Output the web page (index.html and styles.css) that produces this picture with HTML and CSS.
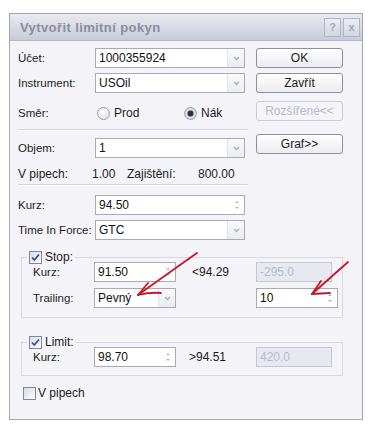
FILE: index.html
```html
<!DOCTYPE html>
<html lang="cs">
<head>
  <meta charset="UTF-8" />
  <title>Vytvořit limitní pokyn</title>
  <link rel="stylesheet" href="styles.css">
</head>
<body>
  <div class="dialog">
    <div class="titlebar">
      <span class="title">Vytvořit limitní pokyn</span>
      <span class="tbtns"><span class="tbtn">?</span><span class="tbtn">x</span></span>
    </div>

    <div class="body">
      <div class="top">
        <div class="form">
          <div class="row">
            <span class="lbl">Účet:</span>
            <div class="combo"><span class="val">1000355924</span><span class="drop"><svg width="7" height="5" viewBox="0 0 7 5"><path d="M1 1l2.5 2.5L6 1" fill="none" stroke="#a9abb8" stroke-width="1.3"/></svg></span></div>
          </div>
          <div class="row">
            <span class="lbl">Instrument:</span>
            <div class="combo"><span class="val">USOil</span><span class="drop"><svg width="7" height="5" viewBox="0 0 7 5"><path d="M1 1l2.5 2.5L6 1" fill="none" stroke="#a9abb8" stroke-width="1.3"/></svg></span></div>
          </div>
          <div class="row radios">
            <span class="lbl">Směr:</span>
            <span class="radio"><span class="dot"></span>Prod</span>
            <span class="radio on"><span class="dot"></span>Nák</span>
          </div>
          <div class="sep"></div>
          <div class="row">
            <span class="lbl">Objem:</span>
            <div class="combo"><span class="val">1</span><span class="drop"><svg width="7" height="5" viewBox="0 0 7 5"><path d="M1 1l2.5 2.5L6 1" fill="none" stroke="#a9abb8" stroke-width="1.3"/></svg></span></div>
          </div>
          <div class="row info">
            <span class="lbl">V pipech:</span>
            <span class="num">1.00</span>
            <span class="ilbl">Zajištění:</span>
            <span class="num">800.00</span>
          </div>
          <div class="sep sep2"></div>
          <div class="row">
            <span class="lbl">Kurz:</span>
            <div class="spin wide"><span class="val">94.50</span><span class="arrows"><i class="up"></i><i class="dn"></i></span></div>
          </div>
          <div class="row">
            <span class="lbl">Time In Force:</span>
            <div class="combo"><span class="val">GTC</span><span class="drop"><svg width="7" height="5" viewBox="0 0 7 5"><path d="M1 1l2.5 2.5L6 1" fill="none" stroke="#a9abb8" stroke-width="1.3"/></svg></span></div>
          </div>
        </div>

        <div class="actions">
          <button class="btn">OK</button>
          <button class="btn">Zavřít</button>
          <button class="btn off">Rozšířené&lt;&lt;</button>
          <button class="btn graf">Graf&gt;&gt;</button>
        </div>
      </div>

      <fieldset class="group stop">
        <legend><span class="check on"><svg width="11" height="11" viewBox="0 0 11 11"><path d="M2 5.5l2.3 2.5L9 2.5" fill="none" stroke="#2f4f9c" stroke-width="1.8"/></svg></span>Stop:</legend>
        <div class="grid">
          <span class="glbl">Kurz:</span>
          <div class="spin"><span class="val">91.50</span><span class="arrows"><i class="up"></i><i class="dn"></i></span></div>
          <span class="hint">&lt;94.29</span>
          <div class="box dis">-295.0</div>

          <span class="glbl">Trailing:</span>
          <div class="combo small"><span class="val">Pevný</span><span class="drop"><svg width="7" height="5" viewBox="0 0 7 5"><path d="M1 1l2.5 2.5L6 1" fill="none" stroke="#a9abb8" stroke-width="1.3"/></svg></span></div>
          <span class="hint"></span>
          <div class="spin"><span class="val">10</span><span class="arrows"><i class="up"></i><i class="dn"></i></span></div>
        </div>
      </fieldset>

      <fieldset class="group limit">
        <legend><span class="check on"><svg width="11" height="11" viewBox="0 0 11 11"><path d="M2 5.5l2.3 2.5L9 2.5" fill="none" stroke="#2f4f9c" stroke-width="1.8"/></svg></span>Limit:</legend>
        <div class="grid">
          <span class="glbl">Kurz:</span>
          <div class="spin"><span class="val">98.70</span><span class="arrows"><i class="up"></i><i class="dn"></i></span></div>
          <span class="hint gt">&gt;94.51</span>
          <div class="box dis">420.0</div>
        </div>
      </fieldset>

      <label class="pip"><span class="check"></span>V pipech</label>
    </div>

    <svg class="marks" width="371" height="426" viewBox="0 0 371 426">
      <g fill="none" stroke="#c4182a" stroke-width="1.8" stroke-linecap="round">
        <path d="M197 253 Q170 272 138 295"/>
        <path d="M138 295 L148 283"/>
        <path d="M138 295 Q150 292 161 293"/>
        <path d="M348 262 Q330 278 312 294"/>
        <path d="M312 294 L321 281"/>
        <path d="M312 294 L330 293"/>
      </g>
    </svg>
  </div>
</body>
</html>
```

FILE: styles.css
```css
body {
  margin: 0;
  background: #fff;
  font-family: "Liberation Sans", Arial, sans-serif;
  font-size: 11.5px;
  color: #1c1c1c;
}
.dialog {
  position: relative;
  margin: 13px 0 0 9px;
  width: 354px;
  height: 407px;
  box-sizing: border-box;
  border: 1px solid #a3a5b3;
  background: #f4f4f8;
}
.titlebar {
  height: 26px;
  display: flex;
  align-items: center;
  justify-content: space-between;
  padding: 0 2px 0 10px;
  background: linear-gradient(#e9eaf1, #c9cbd8);
  border-bottom: 1px solid #b5b7c6;
}
.title {
  font-weight: bold;
  font-size: 13px;
  letter-spacing: 0.4px;
  color: #8a8d9d;
}
.tbtns {
  display: flex;
  gap: 2px;
}
.tbtn {
  width: 17px;
  height: 19px;
  box-sizing: border-box;
  border: 1px solid #b3b5c4;
  background: linear-gradient(#eceef4, #d3d5e0);
  color: #a5a7b6;
  font-weight: bold;
  font-size: 11px;
  display: flex;
  align-items: center;
  justify-content: center;
}
.body {
  padding: 7px 0 0 8px;
}
.top {
  display: flex;
}
.form {
  width: 230px;
}
.row {
  display: flex;
  align-items: center;
  height: 20px;
  margin-bottom: 5px;
}
.lbl {
  width: 77px;
  flex: none;
}
.combo, .spin, .box {
  height: 20px;
  box-sizing: border-box;
  border: 1px solid #a8abb6;
  background: #fff;
  display: flex;
  align-items: center;
  font-size: 12px;
  color: #111;
}
.combo {
  width: 150px;
}
.combo.small, .spin {
  width: 82px;
}
.spin.wide {
  width: 150px;
}
.val {
  flex: 1;
  padding-left: 3px;
}
.drop {
  width: 16px;
  align-self: stretch;
  background: linear-gradient(#fafafc, #ebecf1);
  border-left: 1px solid #e2e3ea;
  display: flex;
  align-items: center;
  justify-content: center;
}
.arrows {
  width: 14px;
  display: flex;
  flex-direction: column;
  align-items: center;
  gap: 4px;
}
.arrows i {
  width: 0;
  height: 0;
  border-left: 2px solid transparent;
  border-right: 2px solid transparent;
}
.arrows .up {
  border-bottom: 2px solid #b4b6c0;
}
.arrows .dn {
  border-top: 2px solid #b4b6c0;
}
.radios {
  margin-top: 10px;
}
.radio {
  display: flex;
  align-items: center;
  gap: 4px;
  font-size: 12px;
  width: 87px;
  flex: none;
  margin-left: 2px;
}
.radio.on {
  margin-left: 0;
}
.dot {
  width: 11px;
  height: 11px;
  border-radius: 50%;
  border: 1px solid #999cab;
  background: radial-gradient(circle at 40% 35%, #fff, #dcdde6);
  box-sizing: content-box;
}
.radio.on .dot {
  background: radial-gradient(circle, #2d2e38 0 2.5px, #8c8e9c 3px, #dcdde6 4px);
}
.sep {
  border-top: 1px solid #d3d4de;
  border-bottom: 1px solid #fff;
  margin: 6px 0 7px;
}
.sep2 {
  margin: 2px 0 9px;
}
.info {
  height: 16px;
  margin: 8px 0 2px;
  font-size: 12px;
}
.info .lbl {
  width: 74px;
}
.num {
  width: 29px;
  flex: none;
}
.info .ilbl {
  width: 77px;
  flex: none;
  padding-left: 6px;
  box-sizing: border-box;
}
.actions {
  margin-left: 8px;
  display: flex;
  flex-direction: column;
  width: 87px;
}
.btn {
  height: 20px;
  margin-bottom: 5px;
  font-family: inherit;
  font-size: 12px;
  color: #1a1a1a;
  background: linear-gradient(#ffffff, #ebebf1);
  border: 1px solid #8d8f9c;
  border-radius: 3px;
  padding: 0;
}
.btn.off {
  margin-top: 3px;
  color: #b7b9c6;
  border-color: #c9cbd5;
  background: #f5f5f9;
}
.btn.graf {
  margin-top: 8px;
}
.group {
  margin: 5px 0 0 3px;
  width: 322px;
  box-sizing: border-box;
  border: 1px solid #d7d8e1;
  padding: 0 0 9px 0;
  min-width: 0;
}
.group legend {
  margin-left: 5px;
  padding: 0 2px;
  display: flex;
  align-items: center;
  gap: 3px;
  font-size: 12px;
}
.check {
  width: 11px;
  height: 11px;
  border: 1px solid #84879a;
  background: linear-gradient(135deg, #dcdde5, #fdfdfe);
  display: inline-flex;
  align-items: center;
  justify-content: center;
}
.grid {
  display: grid;
  grid-template-columns: 61px 82px 80px 76px;
  grid-auto-rows: 20px;
  row-gap: 6px;
  align-items: center;
  margin: -2px 0 0 11px;
}
.hint {
  padding-left: 16px;
  font-size: 12px;
}
.hint.gt {
  padding-left: 13px;
}
.box.dis {
  width: 76px;
  padding-left: 3px;
  background: #e7e8f0;
  border-color: #c4c7d3;
  color: #b8bbc9;
}
.limit {
  margin-top: 17px;
  padding-bottom: 8px;
}
.pip {
  display: flex;
  align-items: center;
  gap: 2px;
  margin: 10px 0 0 5px;
  font-size: 12px;
}
.marks {
  position: absolute;
  left: -10px;
  top: -14px;
  pointer-events: none;
}
```
